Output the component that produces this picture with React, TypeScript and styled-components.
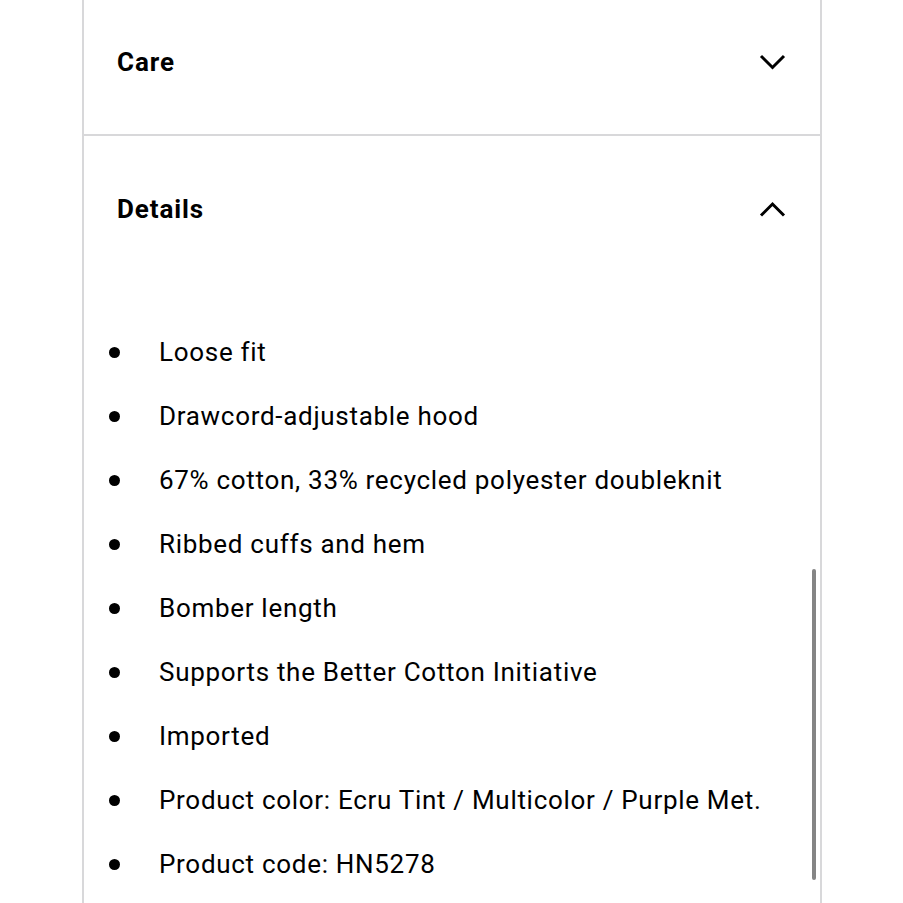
import React from "react";
import styled, { createGlobalStyle } from "styled-components";

const GlobalStyle = createGlobalStyle`
  html, body {
    margin: 0;
    padding: 0;
    background: #fff;
    overflow: hidden;
  }
  body {
    font-family: Roboto, "Liberation Sans", sans-serif;
    color: #000;
  }
`;

const details = [
  "Loose fit",
  "Drawcord-adjustable hood",
  "67% cotton, 33% recycled polyester doubleknit",
  "Ribbed cuffs and hem",
  "Bomber length",
  "Supports the Better Cotton Initiative",
  "Imported",
  "Product color: Ecru Tint / Multicolor / Purple Met.",
  "Product code: HN5278",
];

const Page = styled.div`
  height: 903px;
  display: flex;
  padding-left: 82px;
`;

const Panel = styled.div`
  position: relative;
  width: 736px;
  margin-top: -11px;
  border-left: 2px solid #d8d8da;
  border-right: 2px solid #d8d8da;
`;

const Section = styled.section<{ $open?: boolean }>`
  border-bottom: ${(p) => (p.$open ? "none" : "2px solid #d8d8da")};
`;

const Header = styled.div`
  height: 145px;
  display: flex;
  align-items: center;
  justify-content: space-between;
  padding: 0 34px 0 33px;
`;

const Title = styled.h3`
  margin: 0;
  font-size: 26px;
  font-weight: 700;
  letter-spacing: 0.9px;
`;

const List = styled.ul`
  list-style: none;
  margin: 0;
  padding: 54px 0 0 25px;
  display: flex;
  flex-direction: column;
  gap: 30px;
`;

const Item = styled.li`
  display: flex;
  align-items: center;
  height: 34px;
  font-size: 26px;
  line-height: 34px;
  letter-spacing: 0.7px;
`;

const Bullet = styled.span`
  width: 11px;
  height: 11px;
  border-radius: 50%;
  background: #000;
  margin-right: 39px;
  flex-shrink: 0;
`;

const ScrollThumb = styled.div`
  position: absolute;
  right: 4px;
  top: 580px;
  width: 4px;
  height: 311px;
  border-radius: 2px;
  background: #858585;
`;

const Chevron = ({ up }: { up?: boolean }) => (
  <svg width="27" height="16" viewBox="0 0 27 16" fill="none">
    <path
      d={up ? "M2 14.5 L13.5 3 L25 14.5" : "M2 2 L13.5 13.5 L25 2"}
      stroke="#000"
      strokeWidth="3"
    />
  </svg>
);

export default function App() {
  return (
    <>
      <GlobalStyle />
      <Page>
        <Panel>
          <Section>
            <Header>
              <Title>Care</Title>
              <Chevron />
            </Header>
          </Section>
          <Section $open>
            <Header>
              <Title>Details</Title>
              <Chevron up />
            </Header>
            <List>
              {details.map((d) => (
                <Item key={d}>
                  <Bullet />
                  {d}
                </Item>
              ))}
            </List>
          </Section>
          <ScrollThumb />
        </Panel>
      </Page>
    </>
  );
}
